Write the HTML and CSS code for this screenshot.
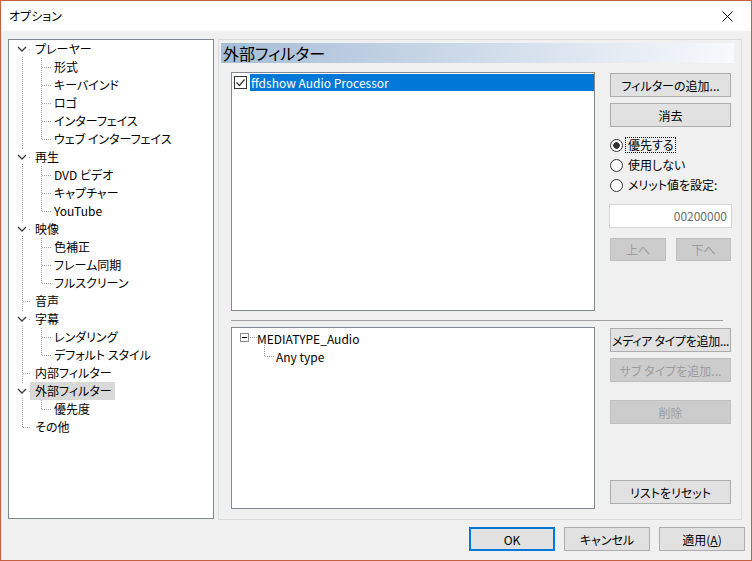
FILE: index.html
```html
<!DOCTYPE html>
<html lang="ja">
<head>
  <meta charset="UTF-8" />
  <meta name="viewport" content="width=device-width, initial-scale=1.0"/>
  <title>オプション</title>
  <link rel="stylesheet" href="styles.css">
</head>
<body>
<div class="window">
  <div class="titlebar">
    <span class="title">オプション</span>
    <svg class="close" width="11" height="11" viewBox="0 0 11 11"><path d="M0.5 0.5l10 10M10.5 0.5l-10 10" stroke="#000" stroke-width="1"/></svg>
  </div>

  <div class="content">
    <div class="main">
      <div class="tree-box">
        <ul class="tree">
          <li>
            <div class="row"><span class="lead parent"><svg width="21" height="18"><rect x="8" y="2" width="11" height="14" fill="#fff"/><path d="M9 7l4 4 4-4" fill="none" stroke="#3c3c3c" stroke-width="1.3"/></svg></span><span class="label">プレーヤー</span></div>
            <ul class="kids">
              <li><div class="row"><span class="lead"></span><span class="label">形式</span></div></li>
              <li><div class="row"><span class="lead"></span><span class="label">キーバインド</span></div></li>
              <li><div class="row"><span class="lead"></span><span class="label">ロゴ</span></div></li>
              <li><div class="row"><span class="lead"></span><span class="label">インターフェイス</span></div></li>
              <li><div class="row"><span class="lead"></span><span class="label">ウェブ インターフェイス</span></div></li>
            </ul>
          </li>
          <li>
            <div class="row"><span class="lead parent"><svg width="21" height="18"><rect x="8" y="2" width="11" height="14" fill="#fff"/><path d="M9 7l4 4 4-4" fill="none" stroke="#3c3c3c" stroke-width="1.3"/></svg></span><span class="label">再生</span></div>
            <ul class="kids">
              <li><div class="row"><span class="lead"></span><span class="label">DVD ビデオ</span></div></li>
              <li><div class="row"><span class="lead"></span><span class="label">キャプチャー</span></div></li>
              <li><div class="row"><span class="lead"></span><span class="label">YouTube</span></div></li>
            </ul>
          </li>
          <li>
            <div class="row"><span class="lead parent"><svg width="21" height="18"><rect x="8" y="2" width="11" height="14" fill="#fff"/><path d="M9 7l4 4 4-4" fill="none" stroke="#3c3c3c" stroke-width="1.3"/></svg></span><span class="label">映像</span></div>
            <ul class="kids">
              <li><div class="row"><span class="lead"></span><span class="label">色補正</span></div></li>
              <li><div class="row"><span class="lead"></span><span class="label">フレーム同期</span></div></li>
              <li><div class="row"><span class="lead"></span><span class="label">フルスクリーン</span></div></li>
            </ul>
          </li>
          <li><div class="row"><span class="lead"></span><span class="label">音声</span></div></li>
          <li>
            <div class="row"><span class="lead parent"><svg width="21" height="18"><rect x="8" y="2" width="11" height="14" fill="#fff"/><path d="M9 7l4 4 4-4" fill="none" stroke="#3c3c3c" stroke-width="1.3"/></svg></span><span class="label">字幕</span></div>
            <ul class="kids">
              <li><div class="row"><span class="lead"></span><span class="label">レンダリング</span></div></li>
              <li><div class="row"><span class="lead"></span><span class="label">デフォルト スタイル</span></div></li>
            </ul>
          </li>
          <li><div class="row"><span class="lead"></span><span class="label">内部フィルター</span></div></li>
          <li>
            <div class="row"><span class="lead parent"><svg width="21" height="18"><rect x="8" y="2" width="11" height="14" fill="#fff"/><path d="M9 7l4 4 4-4" fill="none" stroke="#3c3c3c" stroke-width="1.3"/></svg></span><span class="label selected">外部フィルター</span></div>
            <ul class="kids">
              <li><div class="row"><span class="lead"></span><span class="label">優先度</span></div></li>
            </ul>
          </li>
          <li><div class="row"><span class="lead"></span><span class="label">その他</span></div></li>
        </ul>
      </div>

      <div class="page">
        <div class="caption">外部フィルター</div>
        <div class="page-body">
          <div class="section">
            <div class="list filters">
              <div class="filter-row">
                <svg class="check" width="13" height="13" viewBox="0 0 13 13"><rect x="0.5" y="0.5" width="12" height="12" fill="#fff" stroke="#333"/><path d="M2.5 6.5l3 3 5-6" fill="none" stroke="#333" stroke-width="1.2"/></svg>
                <span class="filter-name">ffdshow Audio Processor</span>
              </div>
            </div>
            <div class="side upper">
              <button class="btn">フィルターの追加...</button>
              <button class="btn">消去</button>
              <div class="radios">
                <div class="radio"><span class="dot on"></span><span class="rtext focus">優先する</span></div>
                <div class="radio"><span class="dot"></span><span class="rtext">使用しない</span></div>
                <div class="radio"><span class="dot"></span><span class="rtext">メリット値を設定:</span></div>
              </div>
              <div class="merit">00200000</div>
              <div class="updown">
                <button class="btn off">上へ</button>
                <button class="btn off">下へ</button>
              </div>
            </div>
          </div>

          <div class="separator"></div>

          <div class="section">
            <div class="list types">
              <div class="trow">
                <svg class="tlead" width="25" height="18"><rect x="8.5" y="4.5" width="8" height="8" fill="#fff" stroke="#8c8c8c"/><path d="M10 8.5h5" stroke="#000"/><path d="M18 8.5h7" stroke="#999" stroke-dasharray="1 1"/></svg>
                <span>MEDIATYPE_Audio</span>
              </div>
              <div class="trow">
                <svg class="tlead" width="44" height="18"><path d="M32.5 -4v13" stroke="#999" stroke-dasharray="1 1"/><path d="M33 9.5h10" stroke="#999" stroke-dasharray="1 1"/></svg>
                <span>Any type</span>
              </div>
            </div>
            <div class="side lower">
              <button class="btn tight">メディア タイプを追加...</button>
              <button class="btn off">サブ タイプを追加...</button>
              <button class="btn off gap-mid">削除</button>
              <button class="btn gap-big">リストをリセット</button>
            </div>
          </div>
        </div>
      </div>
    </div>

    <div class="footer">
      <button class="btn wide default">OK</button>
      <button class="btn wide">キャンセル</button>
      <button class="btn wide">適用(<u>A</u>)</button>
    </div>
  </div>
</div>
</body>
</html>
```

FILE: styles.css
```css
* {
  box-sizing: border-box;
}
html, body {
  margin: 0;
}
body {
  font-family: "Noto Sans CJK JP", "Noto Sans", sans-serif;
  font-size: 12px;
  font-feature-settings: "palt";
  color: #000;
}
ul {
  list-style: none;
  margin: 0;
  padding: 0;
}

.window {
  width: 752px;
  height: 561px;
  border: 1px solid #c4603f;
  background: #f0f0f0;
  display: flex;
  flex-direction: column;
}
.titlebar {
  height: 30px;
  flex: none;
  background: #fff;
  display: flex;
  align-items: center;
  justify-content: space-between;
  padding: 0 18px 0 8px;
}
.title {
  line-height: 16px;
}

.content {
  padding: 8px 6px 9px 7px;
}
.main {
  display: flex;
  gap: 4px;
  align-items: flex-start;
  height: 481px;
}

/* tree */
.tree-box {
  width: 206px;
  height: 480px;
  background: #fff;
  border: 1px solid #828790;
}
.row {
  height: 18px;
  display: flex;
  align-items: center;
  white-space: nowrap;
}
.lead {
  flex: none;
  width: 21px;
  height: 18px;
  background: repeating-linear-gradient(to right, #a0a0a0 0 1px, transparent 1px 2px) 14px 9px / 7px 1px no-repeat;
}
.lead.parent {
  background-position: 20px 9px;
  background-size: 1px 1px;
}
.lead svg {
  display: block;
}
.kids .lead {
  width: 43px;
  background-position: 33px 9px;
  background-size: 10px 1px;
}
.label {
  height: 18px;
  line-height: 18px;
  padding: 0 3px 0 5px;
}
.kids .label {
  padding-left: 2px;
}
.label.selected {
  background: #d9d9d9;
}
.tree > li {
  background: repeating-linear-gradient(to bottom, #a0a0a0 0 1px, transparent 1px 2px) 13px 0 / 1px 100% no-repeat;
}
.tree > li:first-child {
  background-position: 13px 9px;
}
.tree > li:last-child {
  background-size: 1px 9px;
}
.kids {
  background: repeating-linear-gradient(to bottom, #a0a0a0 0 1px, transparent 1px 2px) 32px 0 / 1px calc(100% - 9px) no-repeat;
}

/* page */
.page {
  width: 524px;
  height: 481px;
  border: 1px solid #dadada;
}
.caption {
  margin: 3px 7px 0 2px;
  height: 20px;
  line-height: 20px;
  padding-left: 2px;
  font-size: 16px;
  background: linear-gradient(to right, #a6bdd7, #f7f9fc);
}
.page-body {
  padding: 9px 0 0 12px;
}
.section {
  display: flex;
  align-items: flex-start;
}
.list {
  width: 364px;
  background: #fff;
  border: 1px solid #828790;
}
.filters {
  height: 239px;
  padding-top: 1px;
}
.filter-row {
  height: 17px;
  display: flex;
  align-items: center;
  padding-left: 2px;
}
.check {
  flex: none;
  margin-right: 3px;
}
.filter-name {
  flex: 1;
  height: 17px;
  line-height: 17px;
  padding-left: 1px;
  background: #0078d7;
  color: #fff;
}
.types {
  height: 182px;
  padding-top: 1px;
}
.trow {
  height: 18px;
  display: flex;
  align-items: center;
}
.tlead {
  flex: none;
  overflow: visible;
}
.separator {
  width: 492px;
  height: 1px;
  margin: 9px 0 6px;
  background: #a0a0a0;
}

.side {
  width: 121px;
  margin: 1px 0 0 15px;
  display: flex;
  flex-direction: column;
}
.btn {
  height: 24px;
  padding: 0;
  border: 1px solid #adadad;
  background: #e1e1e1;
  font: inherit;
  font-feature-settings: "palt";
  color: #000;
  white-space: nowrap;
  display: flex;
  align-items: center;
  justify-content: center;
}
.btn.tight {
  letter-spacing: -0.3px;
}
.btn + .btn {
  margin-top: 6px;
}
.btn.off {
  background: #cccccc;
  border-color: #bfbfbf;
  color: #9c9c9c;
}
.lower .gap-mid {
  margin-top: 18px;
}
.lower .gap-big {
  margin-top: 56px;
}

.radios {
  margin-top: 8px;
}
.radio {
  height: 20px;
  display: flex;
  align-items: center;
}
.dot {
  width: 13px;
  height: 13px;
  border: 1px solid #333;
  border-radius: 50%;
  background: #fff;
  margin-right: 2px;
  flex: none;
}
.dot.on {
  background: radial-gradient(circle, #333 0 3px, #fff 3.6px);
}
.rtext {
  padding: 0 1px 0 2px;
  border: 1px solid transparent;
  line-height: 14px;
}
.rtext.focus {
  border: 1px dotted #000;
}
.merit {
  margin: 9px 0 0 -1px;
  width: 123px;
  height: 24px;
  background: #fff;
  border: 1px solid #d5d5d5;
  color: #6d6d6d;
  text-align: right;
  line-height: 22px;
  padding-right: 4px;
}
.updown {
  margin-top: 10px;
  display: flex;
  gap: 10px;
}
.updown .btn {
  width: 56px;
  height: 23px;
  margin-top: 0;
}
.updown .btn + .btn {
  width: 55px;
}

.footer {
  margin-top: 7px;
  display: flex;
  justify-content: flex-end;
  gap: 9px;
}
.btn.wide {
  width: 86px;
  margin-top: 0;
}
.btn.default {
  border: 2px solid #0078d7;
}
```
